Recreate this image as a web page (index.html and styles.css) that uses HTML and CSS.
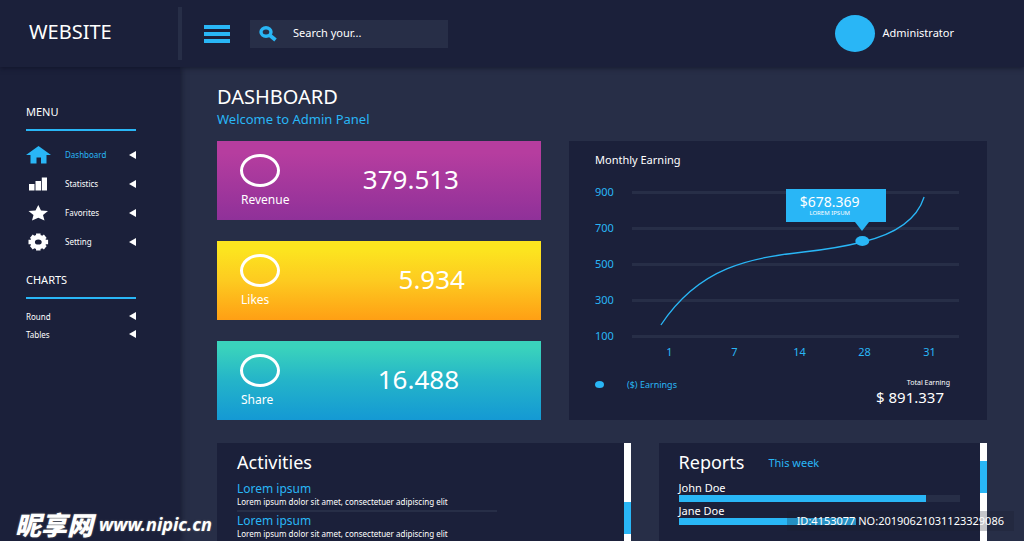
FILE: index.html
```html
<!DOCTYPE html>
<html lang="en">
<head>
<meta charset="utf-8">
<title>Dashboard</title>
<link rel="stylesheet" href="styles.css">
</head>
<body>
<header class="topbar">
  <div class="brand">WEBSITE</div>
  <button class="menu-button" type="button" aria-label="Toggle menu"><span></span><span></span><span></span></button>
  <label class="search">
    <svg class="search-icon" viewBox="0 0 18 16" aria-hidden="true"><ellipse cx="7" cy="6" rx="5" ry="4.2" fill="none" stroke="currentColor" stroke-width="3.4"/><path d="M10.5 9L16.5 14" stroke="currentColor" stroke-width="3.8"/></svg>
    <input type="text" aria-label="Search" placeholder="Search your...">
  </label>
  <div class="user"><span class="avatar"></span><span>Administrator</span></div>
</header>
<div class="shell">
  <aside class="sidebar">
    <h2 class="side-title">MENU</h2>
    <nav class="side-nav">
      <a class="active" href="#"><svg class="icon" viewBox="0 0 26 18" aria-hidden="true"><path fill="currentColor" d="M12.500 0L25 9H20.500V17.500H15V11.500H10.500V17.500H4.500V9H0Z"/></svg><span>Dashboard</span><i class="arrow"></i></a>
      <a href="#"><svg class="icon" viewBox="0 0 26 18" aria-hidden="true"><path fill="currentColor" d="M3 9H8.500V15.500H3ZM9.500 6H15V15.500H9.500ZM15.800 2.500H21V15.500H15.800Z"/></svg><span>Statistics</span><i class="arrow"></i></a>
      <a href="#"><svg class="icon" viewBox="0 0 26 18" aria-hidden="true"><path fill="currentColor" d="M12.300 1L15 6.500L22 7L17 11L18.500 16.500L12.300 13.800L6 16.500L7.500 11L2.500 7L9.500 6.500Z"/></svg><span>Favorites</span><i class="arrow"></i></a>
      <a href="#"><svg class="icon" viewBox="0 0 26 18" aria-hidden="true"><g fill="none" stroke="currentColor"><ellipse cx="12.300" cy="9" rx="5.700" ry="4.900" stroke-width="4.600"/><path stroke-width="4.500" d="M12.300 .6V3M12.300 15V17.400M2.500 9H5.300M19.300 9H22.100M5.300 3.200L7.300 4.800M17.300 13.200L19.300 14.800M19.300 3.200L17.300 4.800M7.300 13.200L5.300 14.800"/></g></svg><span>Setting</span><i class="arrow"></i></a>
    </nav>
    <h2 class="side-title">CHARTS</h2>
    <nav class="side-nav compact">
      <a href="#"><span>Round</span><i class="arrow"></i></a>
      <a href="#"><span>Tables</span><i class="arrow"></i></a>
    </nav>
  </aside>
  <main class="content">
    <div class="page-head">
      <h1>DASHBOARD</h1>
      <p>Welcome to Admin Panel</p>
    </div>
    <div class="row overview">
      <div class="stats">
        <section class="stat revenue"><div class="stat-label"><span class="ring"></span><span>Revenue</span></div><strong>379.513</strong></section>
        <section class="stat likes"><div class="stat-label"><span class="ring"></span><span>Likes</span></div><strong>5.934</strong></section>
        <section class="stat share"><div class="stat-label"><span class="ring"></span><span>Share</span></div><strong>16.488</strong></section>
      </div>
      <section class="panel earning">
        <h2>Monthly Earning</h2>
        <div class="chart">
          <div class="y-axis"><span>900</span><span>700</span><span>500</span><span>300</span><span>100</span></div>
          <div class="plot">
            <i></i><i></i><i></i><i></i><i></i>
            <svg class="curve" viewBox="0 0 328 180" preserveAspectRatio="none" aria-hidden="true">
              <path d="M29 151C68 92 120 84 172 78C200 75 215 72 231 68C265 60 286 45 293 23" fill="none" stroke="#29b6f6" stroke-width="1.300"/>
              <ellipse cx="231" cy="67" rx="7" ry="5" fill="#29b6f6"/>
            </svg>
            <div class="tooltip"><b>$678.369</b><small>LOREM IPSUM</small></div>
          </div>
          <div class="x-axis"><span>1</span><span>7</span><span>14</span><span>28</span><span>31</span></div>
        </div>
        <footer class="earning-foot">
          <span class="legend"><i></i>($) Earnings</span>
          <div class="total"><small>Total Earning</small><b>$ 891.337</b></div>
        </footer>
      </section>
    </div>
    <div class="row details">
      <section class="panel scroll-panel">
        <div class="panel-body">
          <h2>Activities</h2>
          <article class="activity"><h3>Lorem ipsum</h3><p>Lorem ipsum dolor sit amet, consectetuer adipiscing elit</p></article>
          <article class="activity"><h3>Lorem ipsum</h3><p>Lorem ipsum dolor sit amet, consectetuer adipiscing elit</p></article>
        </div>
        <div class="scrollbar low"><i></i></div>
      </section>
      <section class="panel scroll-panel">
        <div class="panel-body reports">
          <div class="report-head"><h2>Reports</h2><a href="#">This week</a></div>
          <div class="report"><span>John Doe</span><div class="track"><i style="width:88%"></i></div></div>
          <div class="report"><span>Jane Doe</span><div class="track plain"><i style="width:63%"></i></div></div>
        </div>
        <div class="scrollbar high"><i></i></div>
      </section>
    </div>
  </main>
</div>
<div class="site-mark"><span>昵享网</span><b>www.nipic.cn</b></div>
<div class="id-mark">ID:4153077 NO:20190621031123329086</div>
</body>
</html>
```
FILE: styles.css
```css
* { box-sizing: border-box; }
:root { --dark: #1b203a; --mid: #272e47; --blue: #29b6f6; }
body {
  margin: 0;
  height: 100vh;
  overflow: hidden;
  display: flex;
  flex-direction: column;
  background: var(--mid);
  color: #fff;
  font-family: "Noto Sans", "Noto Sans CJK SC", sans-serif;
  font-size: 11px;
}
h1, h2, h3, p { margin: 0; font-weight: 400; }
a { color: inherit; text-decoration: none; }
b, strong { font-weight: 400; }

.topbar {
  position: relative;
  z-index: 2;
  flex: none;
  display: flex;
  align-items: center;
  height: 67px;
  background: var(--dark);
  box-shadow: 0 1px 5px rgba(10, 12, 30, .6);
}
.brand {
  width: 182px;
  height: 53px;
  padding-left: 29px;
  border-right: 4px solid var(--mid);
  font-size: 20px;
  line-height: 50px;
}
.menu-button {
  display: flex;
  flex-direction: column;
  gap: 3px;
  width: 26px;
  margin: 0 20px 0 22px;
  padding: 0;
  border: 0;
  background: none;
}
.menu-button span { width: 100%; height: 4px; background: var(--blue); }
.search {
  display: flex;
  align-items: center;
  width: 198px;
  height: 28px;
  padding-left: 9px;
  background: var(--mid);
}
.search-icon { flex: none; width: 18px; height: 16px; color: var(--blue); }
.search input {
  flex: 1;
  min-width: 0;
  margin-left: 16px;
  padding: 0 0 2px;
  border: 0;
  outline: 0;
  background: none;
  color: #fff;
  font: inherit;
}
.search input::placeholder { color: #fff; opacity: 1; }
.user { display: flex; align-items: center; gap: 8px; margin: 0 70px 0 auto; }
.user span + span { padding-bottom: 2px; }
.avatar { width: 40px; height: 37px; border-radius: 50%; background: var(--blue); }

.shell { flex: 1; min-height: 0; display: flex; }
.sidebar {
  position: relative;
  z-index: 1;
  flex: none;
  width: 180px;
  padding: 37px 44px 0 26px;
  background: var(--dark);
  box-shadow: 1px 0 6px rgba(10, 12, 30, .6);
}
.side-title {
  padding-bottom: 9px;
  border-bottom: 2px solid var(--blue);
  font-size: 11px;
  line-height: 16px;
}
.side-nav { display: flex; flex-direction: column; padding: 9px 0 16px; }
.side-nav a { display: flex; align-items: center; height: 29px; font-size: 8px; }
.side-nav.compact { padding-top: 8px; }
.side-nav.compact a { height: 18px; }
.side-nav .active { color: var(--blue); }
.icon { width: 26px; height: 18px; margin-right: 13px; }
.arrow {
  margin-left: auto;
  border: solid transparent;
  border-width: 4px 7px 4px 0;
  border-right-color: #fff;
}

.content {
  flex: 1;
  min-width: 0;
  display: flex;
  flex-direction: column;
  padding: 16px 37px 0;
}
.page-head { height: 58px; flex: none; }
.page-head h1 { font-size: 20px; line-height: 27px; }
.page-head p { color: var(--blue); font-size: 13px; line-height: 18px; }
.row { display: grid; gap: 28px; }
.overview { flex: none; grid-template-columns: 324fr 418fr; }
.details { flex: 1; min-height: 0; grid-template-columns: 413fr 328fr; margin-top: 23px; }
.stats { display: flex; flex-direction: column; gap: 21px; }
.stat {
  display: flex;
  justify-content: space-between;
  height: 79px;
  padding: 13px 82px 0 23px;
}
.stat-label { display: flex; flex-direction: column; gap: 4px; font-size: 12px; line-height: 18px; }
.ring + span { padding-left: 1px; }
.ring { width: 40px; height: 33px; border: 3px solid #fff; border-radius: 50%; }
.stat strong { font-size: 26px; line-height: 50px; }
.stat.likes { padding-right: 76px; }
.revenue { background: linear-gradient(#b63d9f 15%, #8f3199); }
.likes { background: linear-gradient(#fce51f 10%, #fdcb20 50%, #ff9f14); }
.share { background: linear-gradient(#3ad3bc 8%, #24b4c9 50%, #1499d4); }

.panel { min-width: 0; min-height: 0; overflow: hidden; background: var(--dark); }
.earning { padding: 10px 28px 0 26px; }
.earning h2 { font-size: 11px; line-height: 18px; }
.chart {
  display: grid;
  grid-template-columns: 37px 1fr;
  margin-top: 5px;
  color: var(--blue);
}
.y-axis, .plot { display: grid; grid-template-rows: repeat(5, 36px); align-items: center; }
.y-axis span { line-height: 16px; }
.plot { position: relative; }
.plot > i { height: 3px; background: var(--mid); }
.curve { position: absolute; inset: 0; width: 100%; height: 100%; }
.tooltip {
  position: absolute;
  left: 47%;
  top: 15px;
  display: flex;
  flex-direction: column;
  align-items: center;
  width: 100px;
  height: 33px;
  padding: 5px 12px 0 0;
  background: var(--blue);
  color: #fff;
}
.tooltip::after {
  content: "";
  position: absolute;
  top: 100%;
  left: 69px;
  border: solid transparent;
  border-width: 9px 7px 0;
  border-top-color: var(--blue);
}
.tooltip b { font-size: 14px; line-height: 16px; }
.tooltip small { font-size: 6px; line-height: 6px; }
.x-axis {
  grid-column: 2;
  display: grid;
  grid-template-columns: repeat(5, 1fr);
  margin: -9px -3px 0 5px;
  text-align: center;
  line-height: 14px;
}
.earning-foot { display: flex; justify-content: space-between; margin-top: 19px; }
.legend { display: flex; align-items: center; height: 12px; color: var(--blue); font-size: 9px; }
.legend i { width: 9px; height: 7px; margin-right: 23px; border-radius: 50%; background: var(--blue); }
.total { display: flex; flex-direction: column; align-items: flex-end; padding-right: 9px; }
.total small { font-size: 7px; line-height: 10px; }
.total b { padding-right: 6px; font-size: 15px; line-height: 18px; }

.scroll-panel { display: flex; }
.panel-body { flex: 1; min-width: 0; padding: 8px 20px 0; }
.panel-body h2 { font-size: 18px; line-height: 22px; }
.activity { width: 260px; max-width: 100%; height: 32px; border-bottom: 2px solid var(--mid); }
.panel-body h2 + .activity { margin-top: 7px; }
.activity h3 { color: var(--blue); font-size: 12px; line-height: 17px; }
.activity p { font-size: 8px; line-height: 10px; white-space: nowrap; }
.scrollbar { flex: none; width: 7px; background: #fff; }
.scrollbar i { display: block; height: 32px; background: var(--blue); }
.low { padding-top: 59px; }
.high { padding-top: 18px; }
.report-head { display: flex; align-items: center; gap: 24px; margin-bottom: 8px; }
.report-head a { padding-top: 2px; color: var(--blue); font-size: 11px; line-height: 16px; }
.report { height: 23px; font-size: 11px; }
.report > span { display: block; line-height: 14px; }
.track { height: 7px; background: var(--mid); }
.track.plain { background: none; }
.track i { display: block; height: 100%; background: var(--blue); }

.site-mark {
  position: absolute;
  z-index: 3;
  left: 15px;
  bottom: 4px;
  display: flex;
  align-items: center;
  gap: 6px;
  font-style: italic;
  line-height: 26px;
  text-shadow: 0 0 2px #777;
}
.site-mark span { font-family: "Noto Sans CJK SC", sans-serif; font-size: 26px; font-weight: 900; }
.site-mark b { font-size: 18px; font-weight: 700; }
.id-mark {
  position: absolute;
  z-index: 3;
  right: 10px;
  bottom: 10px;
  padding: 0 10px;
  background: rgba(24, 27, 45, .25);
  font-size: 11px;
  line-height: 20px;
}
```
